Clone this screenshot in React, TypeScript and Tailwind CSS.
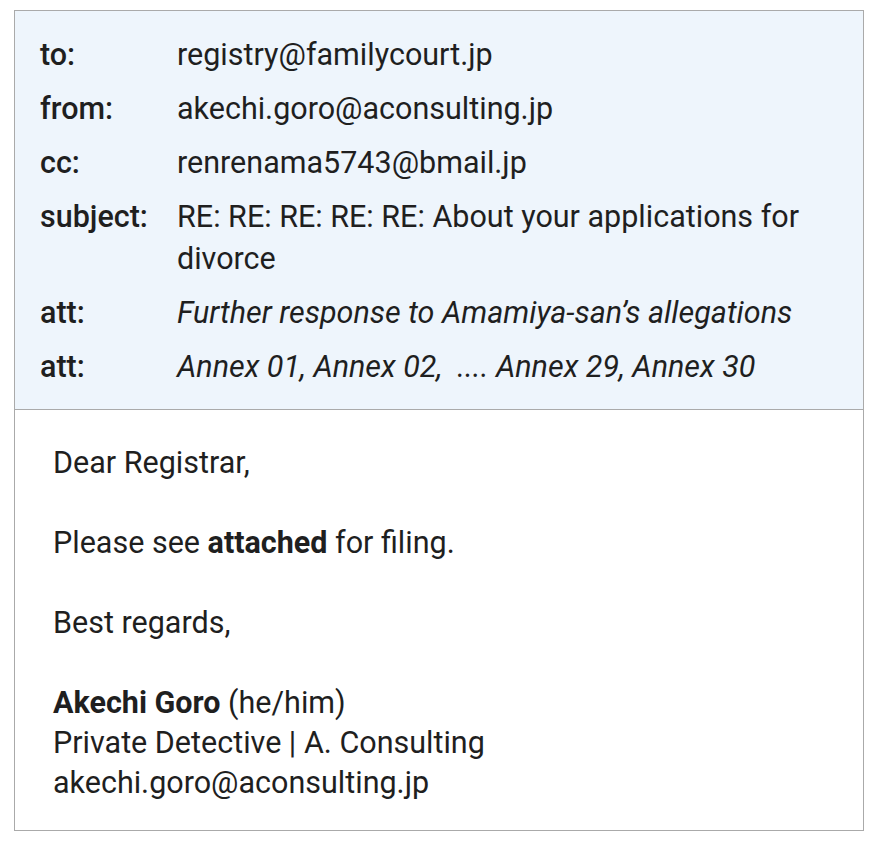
import React from 'react';

const headers = [
  { label: 'to:', value: 'registry@familycourt.jp' },
  { label: 'from:', value: 'akechi.goro@aconsulting.jp' },
  { label: 'cc:', value: 'renrenama5743@bmail.jp' },
  { label: 'subject:', value: 'RE: RE: RE: RE: RE: About your applications for divorce' },
  { label: 'att:', value: 'Further response to Amamiya-san\u2019s allegations', italic: true },
  { label: 'att:', value: 'Annex 01, Annex 02,  .... Annex 29, Annex 30', italic: true },
];

export default function App() {
  return (
    <div className="min-h-screen bg-white pt-[10px] pl-[14px] font-['Roboto',sans-serif] text-[30.5px] leading-[42px] text-[#1f1f1f]">
      <div className="w-[850px] border border-[#aaaaaa]">
        <div className="bg-[#eef5fc] border-b border-[#aaaaaa] pl-[25px] pr-6 pt-[23px] pb-[21px] flex flex-col gap-3">
          {headers.map((h, i) => (
            <div key={i} className="flex">
              <div className="w-[137px] shrink-0 font-medium">{h.label}</div>
              <div className={`whitespace-pre-wrap ${h.italic ? 'italic' : ''}`}>{h.value}</div>
            </div>
          ))}
        </div>
        <div className="pl-[38px] pt-[33px] pb-[27px] leading-[40px]">
          <p>Dear Registrar,</p>
          <p className="mt-10">
            Please see <b className="font-bold">attached</b> for filing.
          </p>
          <p className="mt-10">Best regards,</p>
          <p className="mt-10">
            <b className="font-bold">Akechi Goro</b> (he/him)
          </p>
          <p>Private Detective | A. Consulting</p>
          <p>akechi.goro@aconsulting.jp</p>
        </div>
      </div>
    </div>
  );
}
